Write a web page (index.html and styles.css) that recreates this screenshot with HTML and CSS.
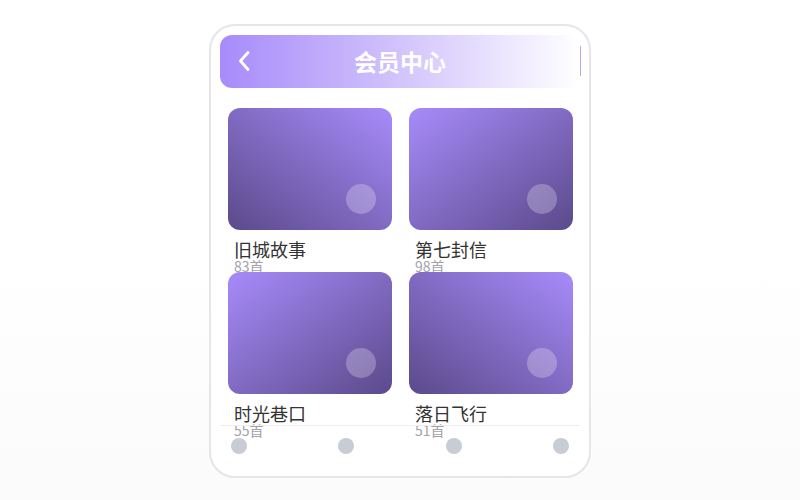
FILE: index.html
```html
<!DOCTYPE html>
<html lang="zh">
<head>
<meta charset="utf-8">
<title>会员中心</title>
<link rel="stylesheet" href="styles.css">
</head>
<body>
<div class="phone">
  <header class="header">
    <button class="back" aria-label="返回">
      <svg width="16" height="22" viewBox="0 0 16 22"><path d="M12 2.5 L4.5 11 L12 19.5" fill="none" stroke="#fff" stroke-width="2.8" stroke-linecap="round" stroke-linejoin="round"/></svg>
    </button>
    <h1 class="title">会员中心</h1>
    <span class="edge"></span>
  </header>
  <main class="content">
    <div class="grid">
      <div class="item">
        <div class="cover cover-bl"><span class="dot"></span></div>
        <div class="name">旧城故事</div>
        <div class="count">83首</div>
      </div>
      <div class="item">
        <div class="cover cover-br"><span class="dot"></span></div>
        <div class="name">第七封信</div>
        <div class="count">98首</div>
      </div>
      <div class="item">
        <div class="cover cover-br"><span class="dot"></span></div>
        <div class="name">时光巷口</div>
        <div class="count">55首</div>
      </div>
      <div class="item">
        <div class="cover cover-bl"><span class="dot"></span></div>
        <div class="name">落日飞行</div>
        <div class="count">51首</div>
      </div>
    </div>
  </main>
  <nav class="tabbar">
    <span class="tab"></span>
    <span class="tab"></span>
    <span class="tab"></span>
    <span class="tab"></span>
  </nav>
</div>
</body>
</html>
```
FILE: styles.css
```css
* { box-sizing: border-box; }
html, body { margin: 0; height: 100%; }
body {
  font-family: "Noto Sans CJK SC", "Noto Sans", sans-serif;
  background: linear-gradient(to bottom, #ffffff 50%, #fbfbfb 100%);
  display: flex;
  align-items: center;
  justify-content: center;
}
.phone {
  width: 382px;
  height: 454px;
  margin-top: 1px;
  border: 2px solid #e6e6ea;
  border-radius: 26px;
  background: #fff;
  padding: 9px;
  display: flex;
  flex-direction: column;
}
.header {
  height: 53px;
  flex: none;
  border-radius: 12px;
  background: linear-gradient(90deg, #a78bfa 0%, #c9b8fb 40%, #ffffff 100%);
  display: grid;
  grid-template-columns: 1fr auto 1fr;
  align-items: center;
  padding: 0 16px;
}
.back {
  background: none;
  border: 0;
  padding: 0;
  margin: 0;
  width: 16px;
  height: 22px;
  display: flex;
}
.title {
  margin: 0;
  font-size: 23px;
  font-weight: 700;
  color: #fff;
  line-height: 1;
}
.edge {
  justify-self: end;
  width: 1.5px;
  height: 30px;
  background: #b9a6f5;
  margin-right: -17px;
}
.content {
  flex: 1;
  min-height: 0;
  padding: 20px 7px 0 8px;
}
.grid {
  display: grid;
  grid-template-columns: 1fr 1fr;
  column-gap: 17px;
  grid-auto-rows: 164px;
}
.item { min-width: 0; }
.cover {
  position: relative;
  height: 122px;
  border-radius: 12px;
}
.cover-bl { background: linear-gradient(to bottom left, #a78bfa, #5b4a8b); }
.cover-br { background: linear-gradient(to bottom right, #a78bfa, #5b4a8b); }
.dot {
  position: absolute;
  right: 16px;
  bottom: 16px;
  width: 30px;
  height: 30px;
  border-radius: 50%;
  background: rgba(255, 255, 255, 0.25);
}
.name {
  margin-top: 9px;
  padding-left: 6px;
  font-size: 18px;
  line-height: 21px;
  color: #333;
}
.count {
  padding-left: 6px;
  font-size: 14px;
  line-height: 12px;
  color: #a2a2a8;
}
.tabbar {
  flex: none;
  height: 42px;
  border-top: 1px solid #eeeef0;
  display: flex;
  align-items: center;
  justify-content: space-between;
  padding: 0 11px;
}
.tab {
  width: 16px;
  height: 16px;
  border-radius: 50%;
  background: #c8ccd4;
}
```
